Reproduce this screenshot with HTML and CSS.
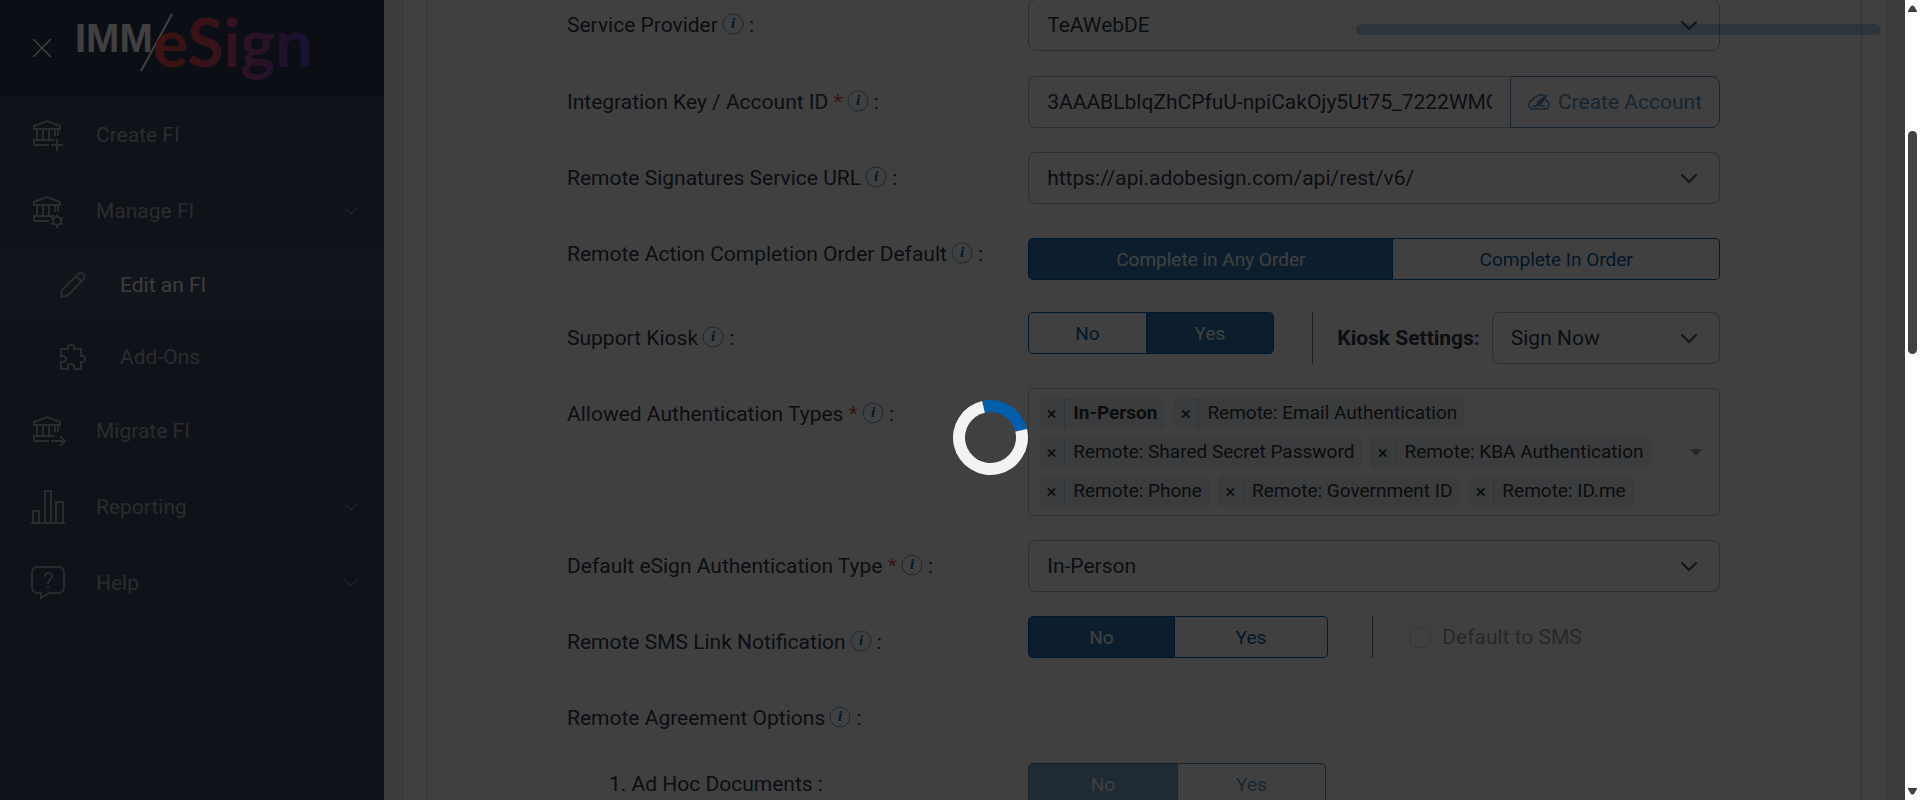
FILE: index.html
```html
<!DOCTYPE html>
<html lang="en">
<head>
  <meta charset="UTF-8">
  <title>IMM eSign - Edit an FI</title>
  <link rel="stylesheet" href="styles.css">
</head>
<body>
  <!-- shared icon shapes -->
  <svg class="icon-defs" aria-hidden="true">
    <symbol id="bank" viewBox="0 0 36 34">
      <path d="M4 11V8l13-5 13 5v3zM7 11v11M13 11v11M19 11v11M25 11v7M28 11v7M4 28v-6h20M4 27h15" />
    </symbol>
    <symbol id="info" viewBox="0 0 22 22">
      <circle cx="11" cy="11" r="10" />
      <text x="11" y="15">i</text>
    </symbol>
    <symbol id="down" viewBox="0 0 16 10">
      <path d="M1 1l7 7 7-7" />
    </symbol>
  </svg>

  <div class="page">
    <aside class="sidebar">
      <div class="brand">
        <button class="close-btn" aria-label="Close menu">
          <svg width="20" height="20" viewBox="0 0 20 20"><path d="M1 1l18 18M19 1L1 19" /></svg>
        </button>
        <svg class="logo" width="244" height="88" viewBox="-5 0 244 88" role="img" aria-label="IMM eSign">
          <defs>
            <linearGradient id="logoFade" gradientUnits="userSpaceOnUse" x1="80" y1="0" x2="232" y2="0">
              <stop offset="0" stop-color="#f04848" />
              <stop offset="0.35" stop-color="#dc4862" />
              <stop offset="0.7" stop-color="#a0489c" />
              <stop offset="1" stop-color="#6048c8" />
            </linearGradient>
          </defs>
          <text class="logo-imm" x="-2" y="52">IMM</text>
          <path d="M64 71L95 14" />
          <text class="logo-esign" x="76" y="67">eSign</text>
        </svg>
      </div>
      <nav class="menu">
        <a href="#" class="menu-item">
          <svg class="menu-icon" viewBox="0 0 36 34"><use href="#bank" width="36" height="34" /><path d="M27 21v12M21 27h12" /></svg>
          <span>Create FI</span>
        </a>
        <a href="#" class="menu-item">
          <svg class="menu-icon" viewBox="0 0 36 34"><use href="#bank" width="36" height="34" /><circle cx="27" cy="27" r="4" /><path d="M27 20v3M27 31v3M21 24l3 1M30 29l3 1M21 30l3-1M30 25l3-1" /></svg>
          <span>Manage FI</span>
          <svg class="menu-arrow"><use href="#down" /></svg>
        </a>
        <a href="#" class="menu-item sub active">
          <svg class="menu-icon small" viewBox="0 0 26 26"><path d="M1 25l1-7L18 2q3-2 5 0t1 5L8 23zM16 4l6 6" /></svg>
          <span>Edit an FI</span>
        </a>
        <a href="#" class="menu-item sub">
          <svg class="menu-icon small" viewBox="0 0 26 26"><path d="M1 5h7q-1-4 3-4t3 4h7v7q4-1 4 3t-4 3v7h-7q1-5-3-5t-3 5H1v-7q5 0 5-3t-5-3z" /></svg>
          <span>Add-Ons</span>
        </a>
        <a href="#" class="menu-item">
          <svg class="menu-icon" viewBox="0 0 36 34"><use href="#bank" width="36" height="34" /><path d="M21 27h14M30 22l5 5-5 5" /></svg>
          <span>Migrate FI</span>
        </a>
        <a href="#" class="menu-item">
          <svg class="menu-icon" viewBox="0 0 36 34"><path d="M1 33h34M3 33V21h6v12M15 33V1h6v32M26 33V12h7v21" /></svg>
          <span>Reporting</span>
          <svg class="menu-arrow"><use href="#down" /></svg>
        </a>
        <a href="#" class="menu-item">
          <svg class="menu-icon" viewBox="0 0 36 34"><path d="M8 1h20q6 0 6 6v14q0 6-6 6h-9l-8 5v-5H8q-6 0-6-6V7q0-6 6-6zM15 11q0-4 3-4 4 0 4 3 0 2-2 4-2 1-2 4M18 20v2" /></svg>
          <span>Help</span>
          <svg class="menu-arrow"><use href="#down" /></svg>
        </a>
      </nav>
    </aside>

    <main class="content">
      <div class="panel">
        <form class="card">
          <div class="row row-first">
            <div class="label"><label for="provider">Service Provider</label><svg class="info"><use href="#info" /></svg> :</div>
            <select id="provider" class="field"><option>TeAWebDE</option></select>
          </div>
          <div class="row">
            <div class="label"><label for="intKey">Integration Key / Account ID <span class="required">*</span></label><svg class="info"><use href="#info" /></svg> :</div>
            <div class="input-group">
              <input type="text" id="intKey" class="field" value="3AAABLblqZhCPfuU-npiCakOjy5Ut75_7222WMQ8">
              <button type="button" class="create-btn">
                <svg width="22" height="16" viewBox="0 0 22 16"><path d="M17 2q-5-3-9 1-3 0-3 3-4 1-4 5t4 4h12q4 0 4-4t-4-5" /><path class="pen" d="M19 1l-8 6-3 5 5-2z" /><path d="M4 12h4l3-2 1 2h5" /></svg>
                Create Account
              </button>
            </div>
          </div>
          <div class="row">
            <div class="label"><label for="serviceUrl">Remote Signatures Service URL</label><svg class="info"><use href="#info" /></svg> :</div>
            <select id="serviceUrl" class="field"><option>https://api.adobesign.com/api/rest/v6/</option></select>
          </div>
          <div class="row row-order">
            <div class="label">Remote Action Completion Order Default<svg class="info"><use href="#info" /></svg> :</div>
            <div class="toggle">
              <button type="button" class="on">Complete in Any Order</button>
              <button type="button">Complete In Order</button>
            </div>
          </div>
          <div class="row">
            <div class="label">Support Kiosk<svg class="info"><use href="#info" /></svg> :</div>
            <div class="inline">
              <div class="toggle toggle-sm">
                <button type="button">No</button>
                <button type="button" class="on">Yes</button>
              </div>
              <div class="kiosk">
                <label for="kiosk">Kiosk Settings:</label>
                <select id="kiosk" class="field"><option>Sign Now</option></select>
              </div>
            </div>
          </div>
          <div class="row">
            <div class="label">Allowed Authentication Types <span class="required">*</span><svg class="info"><use href="#info" /></svg> :</div>
            <div class="multi">
              <ul class="chips">
                <li class="chip locked"><button type="button" aria-label="Remove">×</button><span>In-Person</span></li>
                <li class="chip"><button type="button" aria-label="Remove">×</button><span>Remote: Email Authentication</span></li>
                <li class="chip"><button type="button" aria-label="Remove">×</button><span>Remote: Shared Secret Password</span></li>
                <li class="chip"><button type="button" aria-label="Remove">×</button><span>Remote: KBA Authentication</span></li>
                <li class="chip"><button type="button" aria-label="Remove">×</button><span>Remote: Phone</span></li>
                <li class="chip"><button type="button" aria-label="Remove">×</button><span>Remote: Government ID</span></li>
                <li class="chip"><button type="button" aria-label="Remove">×</button><span>Remote: ID.me</span></li>
              </ul>
              <svg class="caret" width="12" height="7" viewBox="0 0 12 7"><path d="M0 0h12L6 7z" /></svg>
            </div>
          </div>
          <div class="row">
            <div class="label"><label for="authType">Default eSign Authentication Type <span class="required">*</span></label><svg class="info"><use href="#info" /></svg> :</div>
            <select id="authType" class="field"><option>In-Person</option></select>
          </div>
          <div class="row">
            <div class="label">Remote SMS Link Notification<svg class="info"><use href="#info" /></svg> :</div>
            <div class="inline">
              <div class="toggle toggle-md">
                <button type="button" class="on">No</button>
                <button type="button">Yes</button>
              </div>
              <div class="sms">
                <input type="checkbox" id="defaultSms" disabled>
                <label for="defaultSms">Default to SMS</label>
              </div>
            </div>
          </div>
          <div class="row row-heading">
            <div class="label">Remote Agreement Options<svg class="info"><use href="#info" /></svg> :</div>
          </div>
          <div class="row row-option">
            <div class="label">1. Ad Hoc Documents :</div>
            <div class="toggle toggle-even disabled">
              <button type="button" class="on" disabled>No</button>
              <button type="button" disabled>Yes</button>
            </div>
          </div>
        </form>
      </div>
    </main>
  </div>

  <div class="toast-bar"></div>

  <div class="overlay">
    <div class="spinner"></div>
  </div>

  <div class="scrollbar">
    <svg width="9" height="7" viewBox="0 0 9 7"><path d="M0 7V6l3-5q1.500-1 3 0l3 5v1z" /></svg>
    <div class="track"><div class="thumb"></div></div>
    <svg width="9" height="7" viewBox="0 0 9 7"><path d="M0 0v1l3 5q1.500 1 3 0l3-5V0z" /></svg>
  </div>
</body>
</html>
```
FILE: styles.css
```css
* {
  box-sizing: border-box;
}

body {
  margin: 0;
  font-family: Roboto, "Liberation Sans", sans-serif;
  font-size: 21px;
  color: #303a4c;
  background-color: #f2f2f2;
  overflow: hidden;
}

button,
input,
select {
  font-family: inherit;
  font-size: inherit;
  color: inherit;
}

.icon-defs {
  display: none;
}

.page {
  display: flex;
  height: 100vh;
  padding-right: 15px;
  overflow: hidden;
}

/* Sidebar */
.sidebar {
  flex: 0 0 384px;
  background-color: #3c4860;
}

.brand {
  display: flex;
  align-items: center;
  gap: 20px;
  height: 96px;
  padding-left: 32px;
  background-color: #2c3850;
}

.close-btn {
  padding: 0;
  border: none;
  background: none;
  line-height: 0;
}

.close-btn path {
  stroke: #fff;
  stroke-width: 1.5;
}

.logo {
  align-self: flex-start;
}

.logo path {
  stroke: #fff;
  stroke-width: 2;
}

.logo-imm {
  font: bold 40px "Liberation Sans", sans-serif;
  fill: #fff;
}

.logo-esign {
  font: bold 66px Lato, sans-serif;
  fill: url(#logoFade);
}

.menu {
  padding-top: 1px;
}

.menu-item {
  display: flex;
  align-items: center;
  height: 76px;
  padding: 0 25px 0 30px;
  color: #a8acb4;
  text-decoration: none;
}

.menu-item.sub {
  height: 72px;
  padding-left: 60px;
}

.menu-item.active {
  background-color: #445068;
  color: #f0f0f0;
}

.menu-icon {
  width: 36px;
  height: 34px;
  margin-right: 30px;
  fill: none;
  stroke: #a8acb4;
  stroke-width: 2;
}

.menu-icon.small {
  width: 26px;
  height: 26px;
  margin-right: 34px;
}

.menu-arrow {
  width: 16px;
  height: 10px;
  margin-left: auto;
  fill: none;
  stroke: #a8acb4;
}

/* Content */
.content {
  flex: 1;
  min-width: 0;
  padding: 0 18px;
}

.panel {
  padding: 0 24px;
  border: solid #d4d4d4;
  border-width: 0 1px;
  background-color: #fdfdfd;
}

.card {
  margin-top: -1px;
  padding: 0 141px 0 139px;
  border: solid #d4d4d4;
  border-width: 0 1px;
  background-color: #fff;
}

.row {
  display: grid;
  grid-template-columns: minmax(0, 2fr) minmax(0, 3fr);
  align-items: start;
  margin-bottom: 24px;
}

.row-first {
  margin-bottom: 25px;
}

.label {
  line-height: 52px;
  white-space: nowrap;
}

.required {
  color: #d9534f;
}

.info {
  width: 22px;
  height: 22px;
  margin-left: 4px;
  vertical-align: -3px;
  fill: none;
  stroke: #337ab7;
  stroke-opacity: 0.7;
}

#info text {
  font: italic bold 15px "Liberation Serif", serif;
  text-anchor: middle;
  fill: #005eab;
  stroke: none;
}

.field {
  width: 100%;
  min-width: 0;
  height: 52px;
  padding: 0 18px;
  border: 1px solid #b4b4b4;
  border-radius: 8px;
  background-color: #fff;
  color: #303a4c;
}

select.field {
  appearance: none;
  background-image: url("data:image/svg+xml,%3Csvg xmlns='http://www.w3.org/2000/svg' width='18' height='11' fill='none' stroke='%23485060' stroke-width='2' stroke-linecap='round'%3E%3Cpath d='M2 2l7 7 7-7'/%3E%3C/svg%3E");
  background-repeat: no-repeat;
  background-position: right 21px center;
}

.input-group {
  display: flex;
}

.input-group .field {
  flex: 1;
  border-right: none;
  border-radius: 8px 0 0 8px;
}

.create-btn {
  display: flex;
  flex: 0 0 210px;
  align-items: center;
  justify-content: center;
  gap: 8px;
  height: 52px;
  padding: 0;
  border: 1px solid #337ab7;
  border-radius: 0 8px 8px 0;
  background-color: #fff;
  color: #337ab7;
  opacity: 0.8;
}

.create-btn path {
  fill: none;
  stroke: #337ab7;
  stroke-width: 1.5;
}

.create-btn .pen {
  fill: #337ab7;
}

/* Toggle buttons */
.toggle {
  display: flex;
  height: 42px;
}

.toggle button {
  padding: 0 87px;
  border: 1px solid #005eab;
  background-color: #fff;
  color: #005eab;
  font-size: 19px;
  white-space: nowrap;
}

.toggle button:first-child {
  border-radius: 5px 0 0 5px;
}

.toggle button:last-child {
  flex: 1;
  padding: 0;
  border-left: none;
  border-radius: 0 5px 5px 0;
}

.toggle button.on {
  background-color: #337ab7;
  color: #fff;
}

.toggle-sm button {
  padding: 0 46px;
}

.toggle-sm button:last-child {
  padding: 0 48px;
}

.toggle-md button {
  padding: 0 60px;
}

.toggle-md button:last-child {
  padding: 0 61px;
}

.toggle-even {
  width: 298px;
}

.toggle-even button {
  flex: 1;
  padding: 0;
}

.toggle.disabled {
  opacity: 0.65;
}

.row-order {
  margin-bottom: 32px;
}

.row-order .toggle {
  margin-top: 10px;
}

.row-heading {
  margin-bottom: 14px;
}

.row-option .label {
  padding-left: 42px;
}

.row-option .toggle {
  margin-top: 5px;
}

.inline {
  display: flex;
  align-items: flex-start;
}

.kiosk {
  display: flex;
  flex: 1;
  align-items: center;
  gap: 12px;
  margin-left: 38px;
  padding-left: 24px;
  border-left: 1px solid #687080;
}

.kiosk label {
  font-weight: bold;
  white-space: nowrap;
}

.sms {
  display: flex;
  align-items: center;
  gap: 11px;
  height: 42px;
  margin-left: 44px;
  padding-left: 37px;
  border-left: 1px solid #687080;
  color: #a0a0a0;
}

.sms input {
  appearance: none;
  width: 21px;
  height: 21px;
  margin: 0;
  border: 1px solid #dcdcdc;
  border-radius: 4px;
}

/* Multi select */
.multi {
  display: flex;
  align-items: center;
  min-height: 128px;
  padding: 8px 17px 8px 10px;
  border: 1px solid #c8c8c8;
  border-radius: 5px;
}

.chips {
  display: flex;
  flex: 1;
  flex-wrap: wrap;
  gap: 8px;
  margin: 0;
  padding: 0;
  list-style: none;
}

.chip {
  display: flex;
  height: 31px;
  border-radius: 5px;
  background-color: #e6eff6;
  color: #333;
  font-size: 19px;
  line-height: 30px;
}

.chip.locked {
  font-weight: bold;
}

.chip button {
  width: 26px;
  padding: 0;
  border: none;
  border-right: 1px solid #c0d4e8;
  background: none;
}

.chip span {
  padding: 0 8px;
}

.caret {
  fill: #999;
}

/* Loading layer */
.toast-bar {
  position: fixed;
  top: 24px;
  right: 39px;
  width: 525px;
  height: 11px;
  border-radius: 6px;
  background-color: rgba(0, 94, 171, 0.3);
}

.overlay {
  position: fixed;
  top: 0;
  right: 15px;
  bottom: 0;
  left: 0;
  background-color: rgba(0, 0, 0, 0.75);
}

.spinner {
  position: absolute;
  top: 50%;
  left: 50%;
  width: 75px;
  height: 75px;
  border: 12px solid #f3f3f3;
  border-top-color: #005eab;
  border-radius: 50%;
  transform: rotate(32deg);
}

/* Page scrollbar */
.scrollbar {
  position: fixed;
  top: 0;
  right: 0;
  bottom: 0;
  display: flex;
  flex-direction: column;
  width: 15px;
  padding: 5px 3px;
  background-color: #fff;
  fill: #424242;
}

.track {
  flex: 1;
  padding-top: 119px;
}

.thumb {
  width: 9px;
  height: 223px;
  border-radius: 5px;
  background-color: #424242;
}
```
